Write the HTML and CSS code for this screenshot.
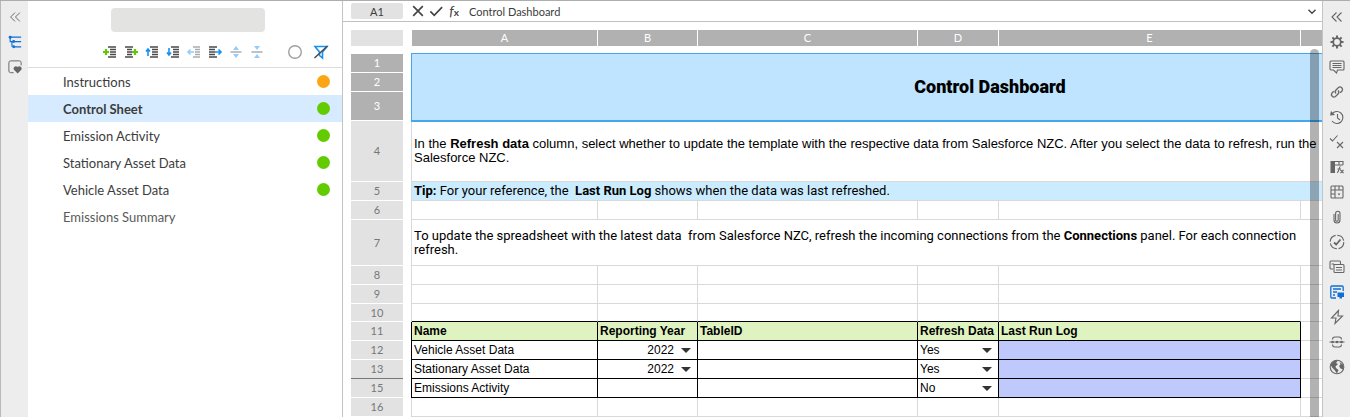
FILE: index.html
```
<!DOCTYPE html>
<html lang="en">
<head>
    <meta charset="UTF-8">
    <meta name="viewport" content="width=device-width, initial-scale=1.0">
    <title>Control Dashboard</title>
    <link rel="stylesheet" href="styles.css">
</head>
<body>
<div class="app">

    <nav class="rail rail-left">
        <button aria-label="Collapse"><svg viewBox="0 0 16 16"><path d="M8 3 3 8l5 5M13.500 3l-5 5 5 5"/></svg></button>
        <button class="active" aria-label="Outline"><svg viewBox="0 0 16 16"><path d="M2.500 2v5.500H6M2.500 2.500h12.500M8 7.500h7M4.500 8v5.500M8 13.500h7" stroke-width="1.300"/><circle class="solid" cx="2.500" cy="2.500" r="1.700"/><circle class="solid" cx="6.500" cy="7.500" r="1.700"/><circle class="solid" cx="6.500" cy="13.500" r="1.700"/></svg></button>
        <button aria-label="Favorites"><svg viewBox="0 0 16 16"><path d="M6.500 14.500H3a2 2 0 0 1-2-2V3a2 2 0 0 1 2-2h10a2 2 0 0 1 2 2v3"/><path class="solid" d="M11 15.500 6.800 11C5 8.500 8.800 5.500 11 8 13.200 5.500 17 8.500 15.200 11Z"/></svg></button>
    </nav>

    <aside class="sidebar">
        <div class="sidebar-top">
            <div class="placeholder"></div>
            <div class="tools">
                <button aria-label="Add before"><svg viewBox="0 0 16 16"><path d="M6 3h8M8 5.500h6M8 8h6M8 10.500h6M6 13h8"/><path class="green" d="M1 8h6M4 5v6"/></svg></button>
                <button aria-label="Add after"><svg viewBox="0 0 16 16"><path d="M2 3h8M4 5.500h5M4 8h5M4 10.500h5M2 13h8"/><path class="green" d="M9 8h6M12 5v6"/></svg></button>
                <button aria-label="Move up"><svg viewBox="0 0 16 16"><path d="M6 3h8M8 5.500h6M8 8h6M8 10.500h6M6 13h8"/><path class="blue" d="M4 12V5M2 7.500l2-2.500 2 2.500"/></svg></button>
                <button aria-label="Move down"><svg viewBox="0 0 16 16"><path d="M6 3h8M8 5.500h6M8 8h6M8 10.500h6M6 13h8"/><path class="blue" d="M4 4v7M2 8.500 4 11l2-2.500"/></svg></button>
                <button class="off" aria-label="Outdent"><svg viewBox="0 0 16 16"><path d="M7 3h7M9 5.500h5M9 8h5M9 10.500h5M7 13h7"/><path class="blue" d="M8 8H2M4.500 5.500 2 8l2.500 2.500"/></svg></button>
                <button aria-label="Indent"><svg viewBox="0 0 16 16"><path d="M2 3h8M2 5.500h6M2 8h6M2 10.500h6M2 13h8"/><path class="blue" d="M8 8h6M11.500 5.500 14 8l-2.500 2.500"/></svg></button>
                <button class="off" aria-label="Expand"><svg viewBox="0 0 16 16"><path d="M2.500 8h11"/><path class="blue-fill" d="M5 6l3-4 3 4zM5 10l3 4 3-4z"/></svg></button>
                <button class="off" aria-label="Collapse all"><svg viewBox="0 0 16 16"><path d="M2.500 8h11"/><path class="blue-fill" d="M5 2l3 4 3-4zM5 14l3-4 3 4z"/></svg></button>
                <button class="status-tool" aria-label="Status"><svg viewBox="0 0 16 16"><circle class="gray" cx="8" cy="8" r="6.300"/></svg></button>
                <button class="filter-tool" aria-label="Filter"><svg viewBox="0 0 16 16"><path class="blue" d="M2 2.500h12L9.500 8v6L6.500 11.500V8Z"/><path d="M1.500 14 14.500 2"/></svg></button>
            </div>
        </div>
        <ul class="sheets">
            <li><a href="#">Instructions</a><span class="dot orange"></span></li>
            <li class="selected"><a href="#">Control Sheet</a><span class="dot"></span></li>
            <li><a href="#">Emission Activity</a><span class="dot"></span></li>
            <li><a href="#">Stationary Asset Data</a><span class="dot"></span></li>
            <li><a href="#">Vehicle Asset Data</a><span class="dot"></span></li>
            <li class="muted"><a href="#">Emissions Summary</a></li>
        </ul>
    </aside>

    <main class="main">
        <div class="formula-bar">
            <input class="name-box" aria-label="Cell" value="A1">
            <button aria-label="Cancel"><svg viewBox="0 0 16 16"><path d="M2.500 2.500l11 11M13.500 2.500l-11 11" stroke-width="1.900"/></svg></button>
            <button aria-label="Accept"><svg viewBox="0 0 16 16"><path d="M1.500 8.500 6 13 15 3.500" stroke-width="1.900"/></svg></button>
            <button class="fx" aria-label="Insert function"><i>f</i><span>x</span></button>
            <input class="formula" aria-label="Formula" value="Control Dashboard">
            <button aria-label="Expand formula"><svg viewBox="0 0 16 16"><path d="M4 6.500 8 10.500 12 6.500" stroke-width="1.600"/></svg></button>
        </div>

        <div class="sheet">
            <table>
                <colgroup>
                    <col class="col-num"><col class="col-gap"><col class="col-a"><col class="col-b"><col class="col-c"><col class="col-d"><col class="col-e"><col class="col-f">
                </colgroup>
                <thead>
                    <tr><th class="corner"></th><td class="gap"></td><th>A</th><th>B</th><th>C</th><th>D</th><th>E</th><th></th></tr>
                    <tr class="spacer"><td colspan="8"></td></tr>
                </thead>
                <tbody>
                    <tr class="in-range"><th>1</th><td class="gap"></td><td class="title" colspan="6" rowspan="3">Control Dashboard</td></tr>
                    <tr class="in-range"><th>2</th><td class="gap"></td></tr>
                    <tr class="in-range r3"><th>3</th><td class="gap"></td></tr>
                    <tr class="r4"><th>4</th><td class="gap"></td><td class="note" colspan="6">In the <b>Refresh data</b> column, select whether to update the template with the respective data from Salesforce NZC. After you select the data to refresh, run the<br>Salesforce NZC.</td></tr>
                    <tr><th>5</th><td class="gap"></td><td class="note tip" colspan="6"><b>Tip:</b> For your reference, the&nbsp; <b>Last Run Log</b> shows when the data was last refreshed.</td></tr>
                    <tr><th>6</th><td class="gap"></td><td></td><td></td><td></td><td></td><td></td><td></td></tr>
                    <tr class="r7"><th>7</th><td class="gap"></td><td class="note alt" colspan="6">To update the spreadsheet with the latest data&nbsp; from Salesforce NZC, refresh the incoming connections from the <b>Connections</b> panel. For each connection<br>refresh.</td></tr>
                    <tr><th>8</th><td class="gap"></td><td></td><td></td><td></td><td></td><td></td><td></td></tr>
                    <tr><th>9</th><td class="gap"></td><td></td><td></td><td></td><td></td><td></td><td></td></tr>
                    <tr class="r10"><th>10</th><td class="gap"></td><td></td><td></td><td></td><td></td><td></td><td></td></tr>
                    <tr class="boxed heading"><th>11</th><td class="gap"></td><td>Name</td><td>Reporting Year</td><td>TableID</td><td>Refresh Data</td><td>Last Run Log</td><td></td></tr>
                    <tr class="boxed">
                        <th>12</th><td class="gap"></td><td>Vehicle Asset Data</td>
                        <td><label class="pick year"><select aria-label="Vehicle reporting year"><option>2022</option></select></label></td>
                        <td></td>
                        <td><label class="pick"><select aria-label="Refresh vehicle data"><option>Yes</option><option>No</option></select></label></td>
                        <td class="log"></td><td></td>
                    </tr>
                    <tr class="boxed before-hidden">
                        <th>13</th><td class="gap"></td><td>Stationary Asset Data</td>
                        <td><label class="pick year"><select aria-label="Stationary reporting year"><option>2022</option></select></label></td>
                        <td></td>
                        <td><label class="pick"><select aria-label="Refresh stationary data"><option>Yes</option><option>No</option></select></label></td>
                        <td class="log"></td><td></td>
                    </tr>
                    <tr class="boxed">
                        <th>15</th><td class="gap"></td><td>Emissions Activity</td>
                        <td></td>
                        <td></td>
                        <td><label class="pick"><select aria-label="Refresh emissions activity"><option>No</option><option>Yes</option></select></label></td>
                        <td class="log"></td><td></td>
                    </tr>
                    <tr><th>16</th><td class="gap"></td><td></td><td></td><td></td><td></td><td></td><td></td></tr>
                </tbody>
            </table>
            <div class="scrollbar"></div>
        </div>
    </main>

    <nav class="rail rail-right">
        <button aria-label="Expand"><svg viewBox="0 0 16 16"><path d="M7.500 3.500 3 8l4.500 4.500M12.500 3.500 8 8l4.500 4.500"/></svg></button>
        <button aria-label="Settings"><svg viewBox="0 0 16 16"><circle cx="8" cy="8" r="3.800" stroke-width="1.800"/><path stroke-width="2" d="M8 1.500v2.500M8 12v2.500M1.500 8H4M12 8h2.500M3.400 3.400l1.800 1.800M10.800 10.800l1.800 1.800M3.400 12.600l1.800-1.800M10.800 5.200l1.800-1.800"/></svg></button>
        <button aria-label="Comments"><svg viewBox="0 0 16 16"><path d="M2 2h12a1 1 0 0 1 1 1v7a1 1 0 0 1-1 1H8.500l-1 3-3-3H2a1 1 0 0 1-1-1V3a1 1 0 0 1 1-1ZM3.500 4.500h9M3.500 6.500h9M3.500 8.500h9"/></svg></button>
        <button aria-label="Links"><svg viewBox="0 0 16 16"><path d="M7 9.500a2.500 2.500 0 0 1 0-3.500l2.500-2.500A2.500 2.500 0 0 1 13 7l-1.800 1.800M9 6.500a2.500 2.500 0 0 1 0 3.500l-2.500 2.500A2.500 2.500 0 0 1 3 9l1.800-1.800" stroke-width="1.300"/></svg></button>
        <button aria-label="History"><svg viewBox="0 0 16 16"><path d="M3 5a6 6 0 1 1 0 7M8.500 5v4l2.500 2"/><path class="solid" d="M1 6.500 2 2l4 4Z"/></svg></button>
        <button aria-label="Validation"><svg viewBox="0 0 16 16"><path d="M1 4.500 3.500 7 8.500 1.500M8 8l6 6M14 8l-6 6"/></svg></button>
        <button aria-label="Functions"><svg viewBox="0 0 16 16"><path class="solid" d="M1.500 2H6v12H1.500z"/><path d="M6 2.500h8V6M2 6h12M10 2v4M8 13.500c2.500 0 1.500-6 3.500-6M8.500 10h3.500M11.500 11l3 3M14.500 11l-3 3"/></svg></button>
        <button aria-label="Pivot"><svg viewBox="0 0 16 16"><path d="M3 2h10a1 1 0 0 1 1 1v10a1 1 0 0 1-1 1H3a1 1 0 0 1-1-1V3a1 1 0 0 1 1-1ZM2 6h12M6 2v12M10 2v4M2 10h4"/><path class="solid" d="M8.500 9.500h3L10 11.500Z"/></svg></button>
        <button aria-label="Attachments"><svg viewBox="0 0 16 16"><path d="M5 5v6a3 3 0 0 0 6 0V4.500a2.200 2.200 0 0 0-4.400 0V11a1.300 1.300 0 0 0 2.600 0V5"/></svg></button>
        <button aria-label="Tasks"><svg viewBox="0 0 16 16"><circle cx="8" cy="8" r="6.800" stroke-dasharray="9 1.700"/><path d="M5 8.500 7.200 10.500 11.500 5.500" stroke-width="1.800"/></svg></button>
        <button aria-label="Copies"><svg viewBox="0 0 16 16"><path d="M4 10H2a1 1 0 0 1-1-1V3a1 1 0 0 1 1-1h8.500a1 1 0 0 1 1 1v2M5 5.500h9a1 1 0 0 1 1 1V12.500a1 1 0 0 1-1 1H6a1 1 0 0 1-1-1ZM7 8.500h6M7 11h6M2.500 5H5"/></svg></button>
        <button class="active" aria-label="Connections"><svg viewBox="0 0 16 16"><path d="M7 14H3a1.200 1.200 0 0 1-1.200-1.200V3.200A1.200 1.200 0 0 1 3 2h10a1.200 1.200 0 0 1 1.200 1.200V7M4 5h8M4 8h4M4 11h2" stroke-width="1.300"/><path class="solid" d="M8.500 8.500H15V13h-2v1.500h-2.500V13h-2Z"/></svg></button>
        <button aria-label="Actions"><svg viewBox="0 0 16 16"><path d="M9.500 1.500 2.500 9H7L6 14.500 13.500 7H9Z"/></svg></button>
        <button aria-label="Chains"><svg viewBox="0 0 16 16"><path d="M0.500 8h15M3.500 5.500c0-1.500 1-2.500 2.500-2.500h4c1.500 0 2.500 1 2.500 2.500M3.500 10.500c0 1.500 1 2.500 2.500 2.500h4c1.500 0 2.500-1 2.500-2.500"/><circle class="solid" cx="3.500" cy="8" r="1.300"/><circle class="solid" cx="8" cy="8" r="1.300"/><circle class="solid" cx="12.500" cy="8" r="1.300"/></svg></button>
        <button aria-label="Web"><svg viewBox="0 0 16 16"><circle cx="8" cy="8" r="6.800"/><path class="solid" d="M1.500 6C3 2.500 6 1 9 1.500L7 4l2 1-2.500 2.500L7 9l2.500 2-1.500 3.500L5.500 11 3.500 9ZM10.500 3 14.500 6v4.500L11.500 9.500 10 7l1.500-1.500Z"/></svg></button>
    </nav>

</div>
</body>
</html>
```
FILE: styles.css
```
* { box-sizing: border-box; }
body { margin: 0; font-family: Lato, sans-serif; color: #3c3c3c; background: #fff; }
button { border: 0; padding: 0; background: none; color: inherit; cursor: pointer; }
input, select { border: 0; padding: 0; margin: 0; background: none; font: inherit; color: inherit; }
svg { display: block; width: 16px; height: 16px; fill: none; stroke: currentColor; stroke-width: 1.1; }
svg .solid { fill: currentColor; stroke: none; }

.app { display: flex; height: 100vh; overflow: hidden; border-top: 1px solid #adadad; }

/* icon rails */
.rail { flex: none; display: flex; flex-direction: column; align-items: center; width: 28px; padding-top: 3px; background: #ededed; color: #666; }
.rail button { display: flex; align-items: center; justify-content: center; width: 26px; height: 25px; }
.rail .active { color: #0f6fd6; }
.rail-left { border-left: 1px solid #b9b9b9; }
.rail-left svg { width: 14px; height: 14px; }
.rail-right { border-left: 1px solid #c4c4c4; }

/* sheet list */
.sidebar { flex: none; width: 315px; border-right: 1px solid #c4c4c4; }
.sidebar-top { height: 67px; padding-top: 7px; border-bottom: 1px solid #dcdcdc; }
.placeholder { width: 154px; height: 24px; margin-left: 83px; border-radius: 4px; background: #e3e3e2; }
.tools { display: flex; justify-content: space-between; width: 166px; margin: 12px 0 0 74px; color: #4a4a4a; }
.tools button { flex: none; width: 16px; }
.tools svg { stroke-width: 1.5; }
.tools .green { stroke: #5fca00; stroke-width: 2.2; }
.tools .blue { stroke: #1590f5; stroke-width: 1.6; }
.tools .gray { stroke: #a0a0a0; stroke-width: 1.4; }
.tools .blue-fill { fill: #1590f5; stroke: none; }
.tools .off { opacity: .45; }
.tools { width: 230px; gap: 5px; justify-content: flex-start; }
.tools .status-tool { margin-left: 17px; }
.tools .filter-tool { margin-left: 5px; }
.sheets { margin: 0; padding: 0; list-style: none; font-size: 13px; }
.sheets li { display: flex; align-items: center; justify-content: space-between; height: 27px; padding: 0 12px 0 35px; }
.sheets a { color: inherit; text-decoration: none; }
.sheets .selected { background: #d6ebff; font-weight: bold; }
.sheets .muted { color: #5a5a5a; }
.dot { width: 13px; height: 13px; border-radius: 50%; background: #62cc00; }
.dot.orange { background: #fca615; }

/* formula bar */
.main { flex: 1; min-width: 0; display: flex; flex-direction: column; }
.formula-bar { flex: none; display: flex; align-items: center; height: 21px; padding: 0 1px 0 8px; border-bottom: 1px solid #c0c0c0; font-size: 11px; }
.formula-bar button { flex: none; width: 18px; height: 16px; color: #444; }
.formula-bar svg { width: 14px; height: 14px; margin: 1px auto; }
.name-box { flex: none; width: 52px; height: 16px; margin-right: 6px; border-radius: 2px; background: #e2e2e2; text-align: center; }
.formula-bar .fx { font: 14px/14px Lato, sans-serif; }
.fx span { font-size: 10px; font-weight: bold; }
.formula { flex: 1; min-width: 0; height: 16px; margin-left: 6px; }

/* spreadsheet grid */
.sheet { position: relative; flex: 1; overflow: hidden; padding: 8px 0 0 8px; }
table { width: 1218px; table-layout: fixed; border-collapse: separate; border-spacing: 0; }
.col-num { width: 52px; }
.col-gap { width: 9px; }
.col-a { width: 186px; }
.col-b { width: 100px; }
.col-c { width: 220px; }
.col-d { width: 81px; }
.col-e { width: 302px; }
.col-f { width: 268px; }
th { padding: 0; font-size: 11px; font-weight: normal; line-height: 14px; }
thead th { height: 16px; background: #b1b1b1; color: #fff; border-right: 1px solid #fff; }
thead .corner { background: #e2e2e2; border-right: 0; }
thead .gap { padding: 0; border: 0; }
thead .spacer td { height: 8px; padding: 0; border: 0; }
tbody tr { height: 19px; }
tbody th { background: #e2e2e2; border-bottom: 1px solid #fff; color: #777; }
tbody td { padding: 0 2px; border-right: 1px solid #d9d9d9; border-bottom: 1px solid #d9d9d9; color: #000; font: 12px/14px "Liberation Sans", Arial, sans-serif; white-space: nowrap; }
tbody .gap { border-bottom: 0; padding: 0; }
tbody .r3 { height: 29px; }
tbody .r4 { height: 61px; }
tbody .r7 { height: 46px; }
tbody .r10 { height: 18px; }
.in-range th { background: #b1b1b1; color: #fff; }
.in-range .gap { border-right-color: #46a6ec; }
td.title { background: #bfe4ff; border-color: #46a6ec; outline: 1px solid #46a6ec; text-align: center; font: 900 18px/20px Roboto, sans-serif; }
td.note { font-size: 13px; }
td.tip, td.alt { font-family: Roboto, sans-serif; }
td.tip { background: #cbecff; }

.r10 td:nth-child(n+3):nth-child(-n+7) { border-bottom-color: #000; }
.boxed td:nth-child(n+2):nth-child(-n+7) { border-color: #000; }
.heading td { font-weight: bold; }
.heading td:nth-child(n+3):nth-child(-n+7) { background: #dff3c0; }
.log { background: #c0c9fb; }
.before-hidden th { border-bottom-color: #777; }

.pick { display: flex; align-items: center; padding-right: 4px; }
.pick::after { content: ""; border: 5px solid transparent; border-top-color: #333; border-bottom: 0; }
.pick select { flex: 1; min-width: 0; height: 14px; appearance: none; }
.year select { margin-right: 7px; text-align-last: right; }

.scrollbar { position: absolute; top: 27px; right: 3px; bottom: 0; width: 9px; border-radius: 5px 5px 0 0; background: rgba(0, 0, 0, .3); }
```
